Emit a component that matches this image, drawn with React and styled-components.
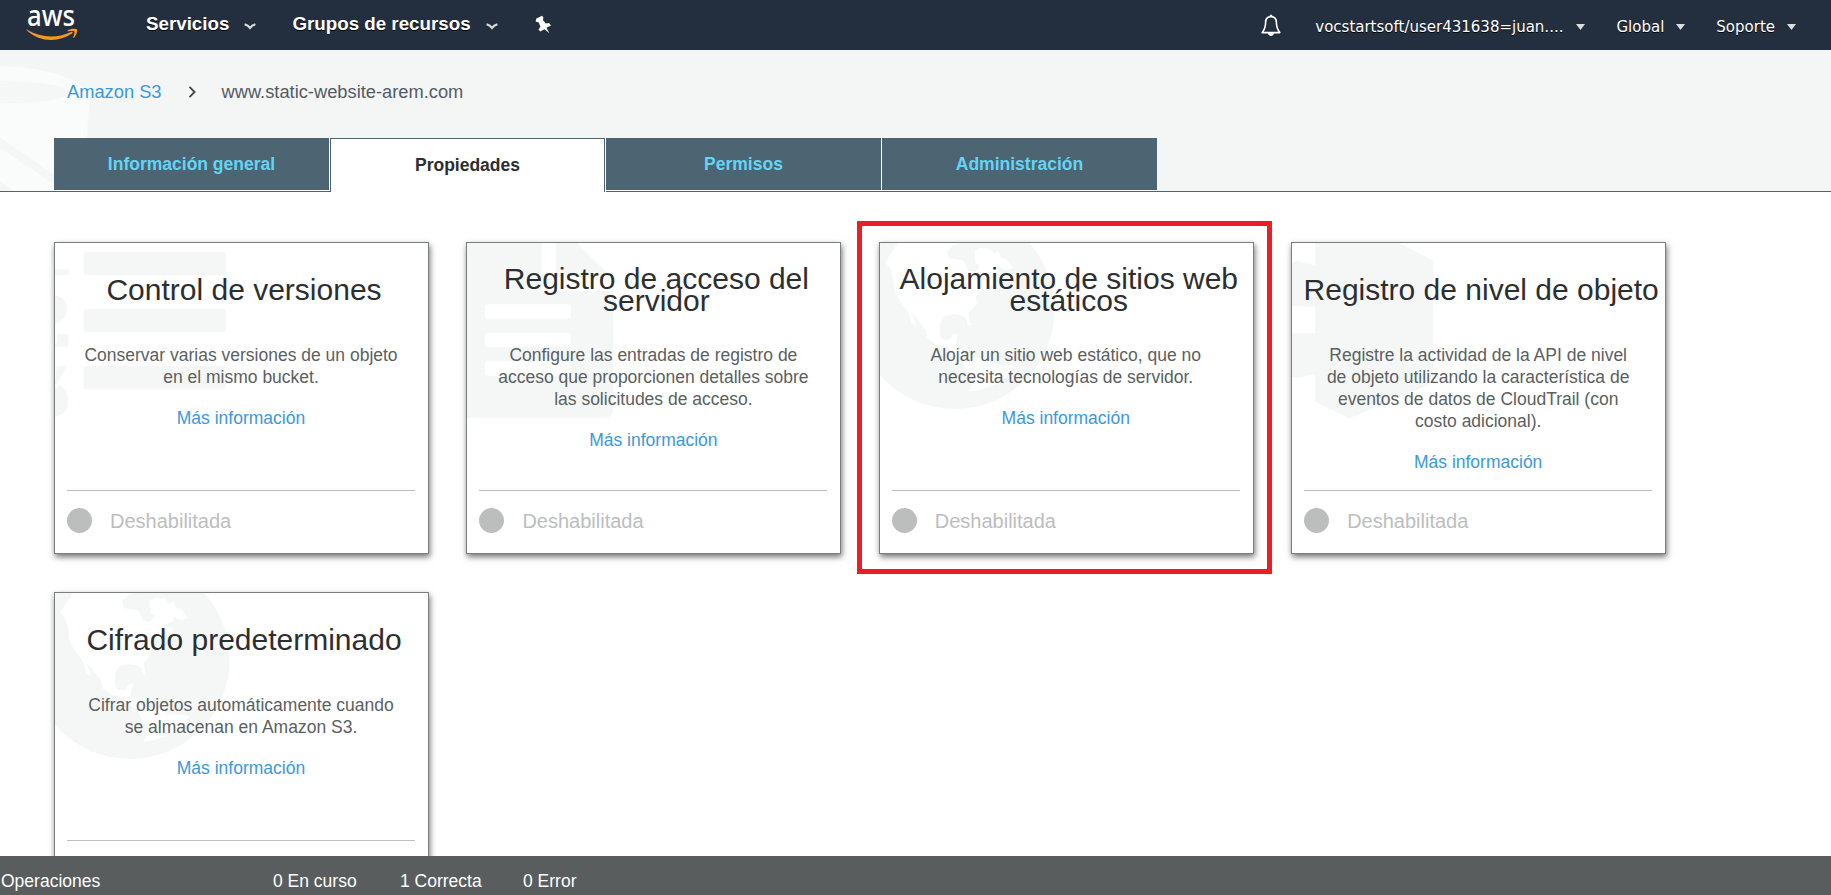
import React from 'react';
import styled, { createGlobalStyle, css } from 'styled-components';

const Global = createGlobalStyle`
  *, *::before, *::after { box-sizing: border-box; }
  body { margin: 0; background: #fff; font-family: "Liberation Sans", Arial, sans-serif; }
`;

const Page = styled.div`
  display: flex;
  flex-direction: column;
  height: 895px;
  overflow: hidden;
`;

const Nav = styled.header`
  display: flex;
  flex: none;
  height: 50px;
  padding: 0 35px 0 26px;
  background: #232f3e;
  color: #fff;
`;

const Logo = styled.svg`
  width: 52px;
  height: 34px;
  margin: 8px 68px 0 0;
  overflow: visible;
`;

const NavLink = styled.div`
  display: flex;
  align-items: center;
  height: 48px;
  margin-right: ${(p) => p.$gap}px;
  font-size: 18.75px;
  font-weight: bold;
  text-shadow: 0 1px 0 #000;
  white-space: nowrap;

  svg { margin: 5px 0 0 15px; }
`;

const PinIcon = styled.svg`
  margin: 15px auto 0 0;
`;

const BellIcon = styled.svg`
  margin: 14px 34px 0 0;
`;

const AccountLink = styled.div`
  display: flex;
  align-items: center;
  height: 53px;
  margin-left: ${(p) => p.$gap || 0}px;
  font-family: "DejaVu Sans", Verdana, sans-serif;
  font-size: 15px;
  text-shadow: 0 1px 0 #000;
  white-space: nowrap;

  svg { margin-left: ${(p) => p.$caretGap || 12}px; }
`;

const BucketHeader = styled.section`
  position: relative;
  flex: none;
  height: 142px;
  border-bottom: 1px solid #4d6472;
  background: #f4f6f6;
`;

const BucketArt = styled.svg`
  position: absolute;
  left: 0;
  top: 0;
`;

const Breadcrumb = styled.nav`
  position: relative;
  display: flex;
  align-items: center;
  height: 88px;
  padding: 0 0 4px 67px;
  font-size: 18.3px;
  color: #545b64;

  svg { margin: 0 26px 0 26px; }
`;

const Link = styled.a`
  color: #3b99d9;
`;

const TabBar = styled.div`
  position: relative;
  display: flex;
  padding-left: 54px;
`;

const Tab = styled.div`
  display: flex;
  align-items: center;
  justify-content: center;
  width: 276px;
  height: 53px;
  border-right: 1px solid #fff;
  border-bottom: 1px solid #fff;
  background: #4d6472;
  color: #64d4f3;
  font-size: 17.5px;
  font-weight: bold;

  &:last-child { width: 275px; border-right: 0; }

  ${(p) => p.$active && css`
    width: 275px;
    height: 54px;
    margin-right: 1px;
    border: 1px solid #4d6472;
    border-bottom: 0;
    background: #fff;
    color: #2c2f30;
    box-shadow: 1px 0 0 #fff;
  `}
`;

const Grid = styled.main`
  display: grid;
  flex: 1;
  min-height: 0;
  grid-template-columns: repeat(4, 375px);
  grid-auto-rows: 312px;
  gap: 38px 37.4px;
  padding: 50px 0 0 54px;
  overflow: hidden;
`;

const CardShell = styled.article`
  position: relative;
  display: flex;
  flex-direction: column;
  border: 1px solid #7b7e7e;
  background: #fff;
  box-shadow: 1px 3px 6px rgba(0, 0, 0, 0.55);
  text-align: center;
`;

const CardArt = styled.svg`
  position: absolute;
  left: 0;
  top: 0;
`;

const Highlight = styled.div`
  position: absolute;
  inset: -22px -19px -21px -23px;
  border: 5px solid #ee1c25;
`;

const CardTitle = styled.h2`
  position: relative;
  display: flex;
  align-items: center;
  justify-content: center;
  height: 94px;
  margin: 0;
  padding-left: 5px;
  color: #2c2f30;
  font-size: 30px;
  font-weight: normal;
  line-height: 22px;
  white-space: pre-line;
`;

const CardText = styled.p`
  position: relative;
  margin: 7px 1px 19px 0;
  color: #5b5f60;
  font-size: 17.5px;
  line-height: 22px;
  white-space: pre-line;
`;

const MoreLink = styled(Link)`
  position: relative;
  margin-right: 1px;
  font-size: 17.5px;
  line-height: 22px;
`;

const Status = styled.div`
  display: flex;
  align-items: center;
  gap: 18px;
  height: 63px;
  margin: auto 13px 0 12px;
  padding-bottom: 3px;
  border-top: 1px solid #bcbebe;
  color: #bcbebe;
  font-size: 20px;

  &::before {
    content: "";
    width: 25px;
    height: 25px;
    border-radius: 50%;
    background: #bcbebe;
  }
`;

const StatusLabel = styled.span`
  padding-top: 1px;
`;

const Operations = styled.footer`
  position: relative;
  display: flex;
  flex: none;
  align-items: center;
  height: 39px;
  padding: 12px 0 0 1px;
  background: #595d5d;
  color: #fff;
  font-size: 17.5px;
`;

const Operation = styled.span`
  width: ${(p) => p.$width}px;
`;

const ArrowDown = () => (
  <svg width="12" height="7" viewBox="0 0 12 7" fill="none" stroke="#dcdcdc" strokeWidth="2.2">
    <path d="M.6 1.2Q4 2 6 4.8Q8 2 11.4 1.2" />
  </svg>
);

const Caret = () => (
  <svg width="9" height="6" viewBox="0 0 9 6" fill="#ddd">
    <path d="M0 0H9L4.5 6Z" />
  </svg>
);

const TINT = '#f5f7f7';

const VersionsArt = () => (
  <g fill={TINT} transform="translate(-15 -13) scale(.33333)">
    <rect x="131" y="66" width="427" height="69" rx="7" />
    <rect x="131" y="237" width="427" height="69" rx="7" />
    <rect x="131" y="408" width="427" height="70" rx="7" />
    <path d="M45 118H87V135H45Z" />
    <path d="M45 195C70 200 81 217 81 238C81 260 66 273 45 283Z" />
    <path d="M52 312H85V350H45V340H52Z" />
    <path d="M50 408H80L52 462C74 472 85 490 85 515C84 540 66 557 45 561V478L58 465L45 462Z" />
  </g>
);

const DocumentArt = () => (
  <g transform="translate(-17 -13) scale(.33333)">
    <path fill={TINT} d="M50 38H275V183H490V540Q488 562 465 564H50Z" />
    <path fill={TINT} d="M318 38H380L484 140H318Z" />
    <g fill="#fff">
      <rect x="105" y="223" width="257" height="43" rx="9" />
      <rect x="105" y="309" width="257" height="42" rx="9" />
      <rect x="105" y="394" width="257" height="43" rx="9" />
    </g>
  </g>
);

const GlobeArt = () => (
  <g transform="translate(-15 -13) scale(.33333)">
    <circle cx="270" cy="238" r="299" fill={TINT} />
    <path
      fill="#fff"
      d="M100 38L60 98L75 112L85 145L88 180L100 205L130 247L140 278L153 292L147 268L136 247L152 262L182 300L188 325L215 344L245 350L262 366L275 382L300 390L290 360L270 348L280 310L262 315L256 330H235L225 318V278L240 258L265 252L290 256L303 265L308 284L318 286L310 250L335 222L332 200L352 180L385 162L398 146L370 138L398 122L402 110L420 120L445 114L425 88L408 84L402 66L385 70L375 56L345 54L328 62L332 100L345 106L330 126L310 122L295 92L252 84L246 64L265 45L290 38Z"
    />
    <path fill="#fff" d="M290 388L310 378L352 385L385 402L448 408L425 440L400 460L372 470L345 480L312 485L328 445L308 425Z" />
  </g>
);

const ObjectArt = () => (
  <path
    fill={TINT}
    transform="translate(-12 -13) scale(.33333)"
    d="M105 38H355L460 92V458L208 565L105 515V432L52 445L36 440V310H105V230L36 228V100L50 92L105 105Z"
  />
);

const CARDS = [
  { title: 'Control de versiones', text: 'Conservar varias versiones de un objeto\nen el mismo bucket.', Art: VersionsArt },
  {
    title: 'Registro de acceso del\nservidor',
    text: 'Configure las entradas de registro de\nacceso que proporcionen detalles sobre\nlas solicitudes de acceso.',
    Art: DocumentArt,
  },
  {
    title: 'Alojamiento de sitios web\nestáticos',
    text: 'Alojar un sitio web estático, que no\nnecesita tecnologías de servidor.',
    Art: GlobeArt,
    highlighted: true,
  },
  {
    title: 'Registro de nivel de objeto',
    text: 'Registre la actividad de la API de nivel\nde objeto utilizando la característica de\neventos de datos de CloudTrail (con\ncosto adicional).',
    Art: ObjectArt,
  },
  {
    title: 'Cifrado predeterminado',
    text: 'Cifrar objetos automáticamente cuando\nse almacenan en Amazon S3.',
    Art: GlobeArt,
    statusHidden: true,
  },
];

const TABS = ['Información general', 'Propiedades', 'Permisos', 'Administración'];

const PropertyCard = ({ title, text, Art, highlighted, statusHidden }) => (
  <CardShell>
    <CardArt width="200" height="200"><Art /></CardArt>
    <CardTitle>{title}</CardTitle>
    <CardText>{text}</CardText>
    <MoreLink>Más información</MoreLink>
    <Status>{!statusHidden && <StatusLabel>Deshabilitada</StatusLabel>}</Status>
    {highlighted && <Highlight />}
  </CardShell>
);

export default function App() {
  return (
    <Page>
      <Global />
      <Nav>
        <Logo viewBox="0 0 52 34">
          <text x="1" y="17.6" fill="#fff" fontFamily="Noto Sans, sans-serif" fontWeight="500" fontSize="28" textLength="48" lengthAdjust="spacingAndGlyphs">aws</text>
          <path fill="#f7981f" d="M.4 22Q0 21.2 1.2 21.8C15 30.2 31 30.4 44.5 24.2C46.5 23.3 47.5 24.4 46 25.6C32 35.4 12 33.8.4 22Z" />
          <path fill="#f7981f" d="M41.5 22.4C44 20.6 50 20.2 51 21.4C51.8 23 50 28 47.8 29.8C47.2 30.2 46.8 29.8 47.2 29C48.2 26.6 49 24.4 48.4 23.6C47.7 22.8 45 23 42.2 23.3C41.4 23.4 41 22.9 41.5 22.4Z" />
        </Logo>
        <NavLink $gap={36}>Servicios <ArrowDown /></NavLink>
        <NavLink $gap={37}>Grupos de recursos <ArrowDown /></NavLink>
        <PinIcon width="17" height="19" viewBox="0 0 17 19" fill="#fff">
          <path d="M1.4 3.6L7 .8L8.4 2.4L8 5.2L10.8 8.6L14 8L16 10.4L11.4 12.8L14.4 18.2L9.6 14.2L5.2 16.6L3.6 14.4L5.4 11.8L3.8 7.6L.6 6.4Z" />
        </PinIcon>
        <BellIcon width="20" height="23" viewBox="0 0 20 23" fill="none" stroke="#fff" strokeWidth="1.6" strokeLinejoin="round">
          <path d="M10 2.6C6.4 2.6 4.6 5.2 4.6 8.6C4.6 13.4 3.6 15.6 1.2 18.6H18.8C16.4 15.6 15.4 13.4 15.4 8.6C15.4 5.2 13.6 2.6 10 2.6Z" />
          <path d="M8.8 1.6H11.2M7.6 19.6Q10 23 12.4 19.6Z" fill="#fff" />
        </BellIcon>
        <AccountLink $caretGap={13}>vocstartsoft/user431638=juan.... <Caret /></AccountLink>
        <AccountLink $gap={31}>Global <Caret /></AccountLink>
        <AccountLink $gap={31}>Soporte <Caret /></AccountLink>
      </Nav>
      <BucketHeader>
        <BucketArt width="100" height="141" fill="#fafcfb">
          <path d="M0 16C45 17 88 30 90 48L82 141H52L0 103Z" />
          <path fill={TINT} d="M0 31C35 31 70 36 71 42C71 49 35 54 0 53Z" />
          <path fill={TINT} d="M0 87L54 125V141L0 102Z" />
          <path d="M0 98L54 134V141H14L0 132Z" />
        </BucketArt>
        <Breadcrumb>
          <Link>Amazon S3</Link>
          <svg width="8" height="12" viewBox="0 0 8 12" fill="none" stroke="#444" strokeWidth="1.8"><path d="M1.5 .8L6.6 6L1.5 11.2" /></svg>
          <span>www.static-website-arem.com</span>
        </Breadcrumb>
        <TabBar>
          {TABS.map((label) => <Tab key={label} $active={label === 'Propiedades'}>{label}</Tab>)}
        </TabBar>
      </BucketHeader>
      <Grid>
        {CARDS.map((card) => <PropertyCard key={card.title} {...card} />)}
      </Grid>
      <Operations>
        <Operation $width={272}>Operaciones</Operation>
        <Operation $width={127}>0 En curso</Operation>
        <Operation $width={123}>1 Correcta</Operation>
        <Operation>0 Error</Operation>
      </Operations>
    </Page>
  );
}
